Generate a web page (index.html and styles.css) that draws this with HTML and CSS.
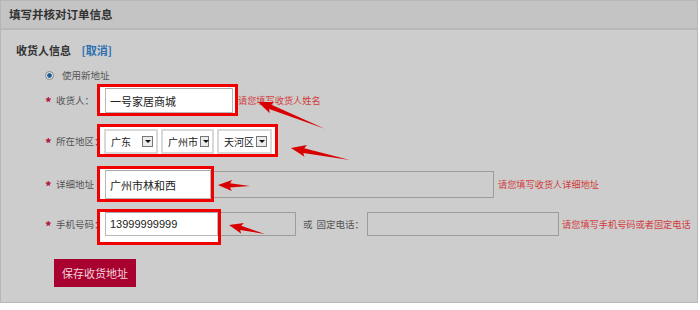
FILE: index.html
```html
<!DOCTYPE html>
<html lang="zh-CN">
<head>
    <meta charset="UTF-8">
    <title>填写并核对订单信息</title>
    <link rel="stylesheet" href="styles.css">
</head>
<body>
<div class="panel">
    <div class="panel-head">填写并核对订单信息</div>
    <div class="panel-body">
        <div class="sec-title">收货人信息 <a class="cancel" href="#">[取消]</a></div>
        <div class="radio-row"><span class="radio"></span>使用新地址</div>

        <div class="form-row row-name">
            <span class="star">*</span><span class="label">收货人：</span>
            <div class="mark mark-name"><input class="field" value="一号家居商城"></div>
            <span class="hint">请您填写收货人姓名</span>
        </div>

        <div class="form-row row-area">
            <span class="star">*</span><span class="label">所在地区：</span>
            <div class="mark mark-area">
                <div class="select sel-1"><span>广东</span><i class="drop"></i></div>
                <div class="select sel-2"><span>广州市</span><i class="drop"></i></div>
                <div class="select sel-3"><span>天河区</span><i class="drop"></i></div>
            </div>
        </div>

        <div class="form-row row-addr">
            <span class="star">*</span><span class="label">详细地址</span>
            <div class="mark mark-addr"><input class="field" value="广州市林和西"></div>
            <input class="plain plain-addr" value="">
            <span class="hint hint-addr">请您填写收货人详细地址</span>
        </div>

        <div class="form-row row-phone">
            <span class="star">*</span><span class="label">手机号码：</span>
            <div class="mark mark-phone"><input class="field num" value="13999999999"></div>
            <input class="plain plain-mobile" value="">
            <span class="or">或</span>
            <span class="label-tel">固定电话：</span>
            <input class="plain plain-tel" value="">
            <span class="hint hint-tel">请您填写手机号码或者固定电话</span>
        </div>

        <button class="save">保存收货地址</button>
    </div>

    <!-- annotation arrows -->
    <svg class="arrows" width="700" height="310" viewBox="0 0 700 310">
        <polygon transform="translate(258 102) rotate(21.9)" points="0,0 15,-6 13,-2.4 72,0 13,2.4 15,6"/>
        <polygon transform="translate(291 148) rotate(11.5)" points="0,0 15,-6 13,-2.4 60,0 13,2.4 15,6"/>
        <polygon transform="translate(218 185) rotate(1.8)" points="0,0 14,-5.5 12,-2.2 32,0 12,2.2 14,5.5"/>
        <polygon transform="translate(229 225) rotate(14)" points="0,0 14,-5.5 12,-2.2 37,0 12,2.2 14,5.5"/>
    </svg>
</div>
</body>
</html>
```

FILE: styles.css
```css
body {
    margin: 0;
    background: #fff;
    font-family: "Noto Sans CJK SC", "Liberation Sans", sans-serif;
    font-size: 9.5px;
    color: #555;
}

.panel {
    position: relative;
    width: 696px;
    height: 301px;
    background: #cdcdcd;
    border: 1px solid #b6b6b6;
}

.panel-head {
    height: 27px;
    line-height: 27px;
    padding-left: 8px;
    background: #c4c4c4;
    border-bottom: 2px solid #b9b9b9;
    font-size: 11.5px;
    font-weight: bold;
    color: #333;
}

.panel-body {
    padding: 13px 0 0 15px;
}

.sec-title {
    height: 14px;
    line-height: 14px;
    font-size: 11px;
    font-weight: bold;
    color: #333;
}

.cancel {
    margin-left: 8px;
    color: #2a6db0;
    text-decoration: none;
}

.radio-row {
    display: flex;
    align-items: center;
    height: 14px;
    margin-top: 11px;
    padding-left: 29px;
}

.radio {
    width: 7px;
    height: 7px;
    margin-right: 8px;
    border: 1px solid #8a8a8a;
    border-radius: 50%;
    background: radial-gradient(circle, #1c4f86 0, #2a6aa8 40%, #e0e0e0 55%);
}

.form-row {
    display: flex;
    align-items: center;
    padding-left: 29px;
    white-space: nowrap;
}

.form-row > * {
    flex-shrink: 0;
}

.row-name {
    margin-top: 2px;
}

.row-area {
    margin-top: 8px;
}

.row-addr {
    margin-top: 9px;
}

.row-phone {
    margin-top: 7px;
    align-items: flex-start;
}

.star {
    width: 11px;
    color: #b0103a;
    font-weight: bold;
    font-size: 13px;
    line-height: 12px;
    padding-top: 4px;
}

.label {
    width: 41px;
}

.row-phone .label,
.row-phone .or,
.row-phone .label-tel,
.row-phone .hint {
    margin-top: 3px;
    line-height: 24px;
}

.row-phone .star {
    margin-top: 3px;
    line-height: 20px;
}

/* red annotation frames */
.mark {
    background: #fff;
    border: 3px solid #f00000;
}

.mark-name {
    padding: 1px 2px 0 5px;
}

.mark-area {
    display: flex;
    gap: 3px;
    padding: 2px 3px 0 4px;
    height: 25px;
}

.mark-addr {
    padding: 1px 0 0 5px;
}

.mark-phone {
    padding: 0 0 6px 5px;
}

.field {
    display: block;
    box-sizing: border-box;
    height: 25px;
    padding: 0 4px;
    border: 1px solid #b8b8b8;
    border-top-color: #a8a8a8;
    background: #fff;
    font-family: "Noto Sans CJK SC", sans-serif;
    font-size: 11px;
    color: #222;
    outline: none;
}

.mark-name .field {
    width: 128px;
}

.mark-addr .field {
    width: 106px;
    height: 29px;
}

.mark-phone .field {
    width: 113px;
    height: 24px;
}

.field.num {
    font-family: "Liberation Sans", Arial, sans-serif;
}

.select {
    box-sizing: border-box;
    display: flex;
    align-items: center;
    justify-content: space-between;
    height: 25px;
    padding: 0 3px 0 5px;
    border: 2px solid #d9d9d9;
    background: #fff;
    font-size: 10px;
    color: #222;
}

.sel-1 { width: 54px; }
.sel-2 { width: 53px; }
.sel-3 { width: 55px; }

.drop {
    position: relative;
    width: 9px;
    height: 9px;
    margin-left: 2px;
    border: 1px solid #777;
    background: #ececec;
}

.drop::after {
    content: "";
    position: absolute;
    left: 1.5px;
    top: 3px;
    border-left: 3px solid transparent;
    border-right: 3px solid transparent;
    border-top: 3px solid #111;
}

.plain {
    box-sizing: border-box;
    height: 27px;
    border: 1px solid #9c9c9c;
    border-left: none;
    background: transparent;
    outline: none;
}

.plain-addr {
    width: 280px;
}

.plain-mobile {
    width: 75px;
    height: 24px;
    margin-top: 3px;
}

.plain-tel {
    width: 192px;
    height: 24px;
    margin-top: 3px;
    margin-left: 3px;
    border-left: 1px solid #9c9c9c;
}

.or {
    margin-left: 7px;
}

.label-tel {
    margin-left: 4px;
}

.hint {
    color: #d23c3c;
    font-size: 9.2px;
}

.hint-addr {
    margin-left: 4px;
}

.hint-tel {
    margin-left: 3px;
}

.save {
    display: block;
    margin: 14px 0 0 38px;
    width: 82px;
    height: 28px;
    padding: 0;
    border: none;
    background: #a8002f;
    color: #f2d6dd;
    font-family: "Noto Sans CJK SC", sans-serif;
    font-size: 11px;
}

.arrows {
    position: absolute;
    left: -1px;
    top: -1px;
    pointer-events: none;
}

.arrows polygon {
    fill: #d80000;
}
```
